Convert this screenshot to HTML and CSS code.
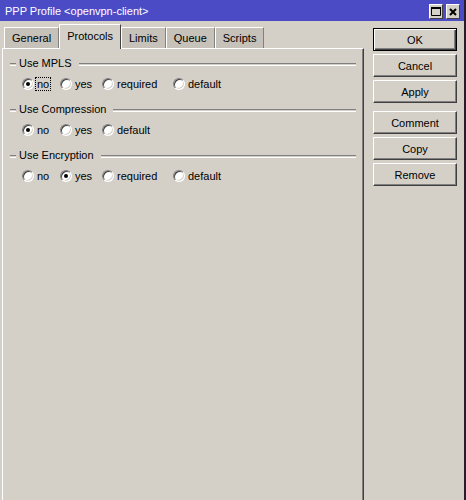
FILE: index.html
```html
<!DOCTYPE html>
<html lang="en">
<head>
    <meta charset="UTF-8">
    <title>PPP Profile &lt;openvpn-client&gt;</title>
    <link rel="stylesheet" href="styles.css">
</head>
<body>
    <div class="window">
        <div class="titlebar">
            <span class="title">PPP Profile &lt;openvpn-client&gt;</span>
            <div class="title-btns">
                <span class="tbtn">
                    <svg width="10" height="9" viewBox="0 0 10 9"><path d="M0.5 1.5H9.5V8.5H0.5Z" fill="none" stroke="#000"/><rect x="0" y="0" width="10" height="2" fill="#000"/></svg>
                </span>
                <span class="tbtn">
                    <svg width="8" height="8" viewBox="0 0 8 8"><path d="M1 1L7 7M7 1L1 7" stroke="#000" stroke-width="2"/></svg>
                </span>
            </div>
        </div>
        <div class="content">
            <div class="tabbox">
                <div class="tabs">
                    <div class="tab">General</div>
                    <div class="tab active">Protocols</div>
                    <div class="tab">Limits</div>
                    <div class="tab">Queue</div>
                    <div class="tab">Scripts</div>
                </div>
                <div class="pane">
                    <div class="group">
                        <div class="group-head"><span class="dash"></span><span class="group-label">Use MPLS</span><span class="rule"></span></div>
                        <div class="options">
                            <label class="opt"><span class="radio checked"></span><span class="focus">no</span></label>
                            <label class="opt"><span class="radio"></span>yes</label>
                            <label class="opt"><span class="radio"></span>required</label>
                            <label class="opt"><span class="radio"></span>default</label>
                        </div>
                    </div>
                    <div class="group">
                        <div class="group-head"><span class="dash"></span><span class="group-label">Use Compression</span><span class="rule"></span></div>
                        <div class="options">
                            <label class="opt"><span class="radio checked"></span>no</label>
                            <label class="opt"><span class="radio"></span>yes</label>
                            <label class="opt"><span class="radio"></span>default</label>
                        </div>
                    </div>
                    <div class="group">
                        <div class="group-head"><span class="dash"></span><span class="group-label">Use Encryption</span><span class="rule"></span></div>
                        <div class="options">
                            <label class="opt"><span class="radio"></span>no</label>
                            <label class="opt"><span class="radio checked"></span>yes</label>
                            <label class="opt"><span class="radio"></span>required</label>
                            <label class="opt"><span class="radio"></span>default</label>
                        </div>
                    </div>
                </div>
            </div>
            <div class="actions">
                <button class="btn default">OK</button>
                <button class="btn">Cancel</button>
                <button class="btn">Apply</button>
                <button class="btn spaced">Comment</button>
                <button class="btn">Copy</button>
                <button class="btn">Remove</button>
            </div>
        </div>
    </div>
</body>
</html>
```

FILE: styles.css
```css
body, html {
    margin: 0;
    padding: 0;
    width: 466px;
    height: 500px;
    overflow: hidden;
    font-family: "Liberation Sans", Arial, sans-serif;
    font-size: 11px;
    color: #000;
    background: #d4d0c8;
}
.window {
    width: 464px;
    height: 500px;
    border-right: 2px solid #2b1b2b;
    background: #d4d0c8;
}
.titlebar {
    height: 21px;
    background: #4b4bc6;
    display: flex;
    align-items: center;
    justify-content: space-between;
    padding: 0 4px 0 5px;
}
.title {
    color: #fff;
    font-size: 11px;
}
.title-btns {
    display: flex;
    gap: 3px;
    margin-top: 2px;
}
.tbtn {
    width: 12px;
    height: 13px;
    background: #d4d0c8;
    border: 1px solid;
    border-color: #fff #404040 #404040 #fff;
    display: flex;
    align-items: center;
    justify-content: center;
}
.content {
    display: flex;
    padding-left: 2px;
}
.tabbox {
    width: 362px;
    display: flex;
    flex-direction: column;
}
.tabs {
    height: 27px;
    display: flex;
    align-items: flex-end;
    padding-left: 2px;
}
.tab {
    height: 20px;
    line-height: 20px;
    padding: 0 7px;
    background: #c6c2ba;
    border: 1px solid;
    border-color: #fff #808080 transparent #fff;
    border-bottom: none;
}
.tab.active {
    height: 24px;
    line-height: 22px;
    padding: 0 7px;
    background: #d4d0c8;
    border-right-color: #404040;
    margin-bottom: -1px;
    position: relative;
    z-index: 1;
}
.pane {
    height: 447px;
    border: 1px solid;
    border-color: #fff #404040 #404040 #fff;
    box-shadow: inset -1px -1px #808080;
    padding: 7px 6px 0 6px;
}
.group {
    margin-bottom: 10px;
}
.group-head {
    height: 14px;
    display: flex;
    align-items: center;
}
.dash, .rule {
    height: 1px;
    border-top: 1px solid #808080;
    border-bottom: 1px solid #fff;
    margin-top: 2px;
}
.dash {
    width: 6px;
    margin-left: 1px;
}
.rule {
    flex: 1;
    margin-right: 1px;
}
.group-label {
    padding: 0 7px 0 3px;
}
.options {
    margin-top: 6px;
    height: 16px;
    padding-left: 13px;
    display: grid;
    grid-template-columns: 38px 42px 71px auto;
    align-items: center;
}
.opt {
    display: flex;
    align-items: center;
    gap: 3px;
}
.radio {
    width: 10px;
    height: 10px;
    border-radius: 50%;
    background: #fff;
    border: 1px solid;
    border-color: #808080 #fff #fff #808080;
    box-shadow: inset 1px 1px #404040, inset -1px -1px #d4d0c8;
    position: relative;
}
.radio.checked::after {
    content: "";
    position: absolute;
    left: 3px;
    top: 3px;
    width: 4px;
    height: 4px;
    border-radius: 50%;
    background: #000;
}
.focus {
    outline: 1px dotted #000;
    padding: 0 1px;
    margin-left: -1px;
}
.actions {
    display: flex;
    flex-direction: column;
    gap: 3px;
    padding-top: 7px;
    margin-left: 9px;
}
.btn {
    width: 84px;
    height: 23px;
    margin: 0;
    padding: 0;
    font-family: inherit;
    font-size: 11px;
    color: #000;
    background: #d4d0c8;
    border: 1px solid;
    border-color: #fff #404040 #404040 #fff;
    box-shadow: inset -1px -1px #808080;
}
.btn.default {
    border: 1px solid #000;
    box-shadow: inset 1px 1px #fff, inset -1px -1px #404040, inset -2px -2px #808080;
}
.btn.spaced {
    margin-top: 5px;
}
```
